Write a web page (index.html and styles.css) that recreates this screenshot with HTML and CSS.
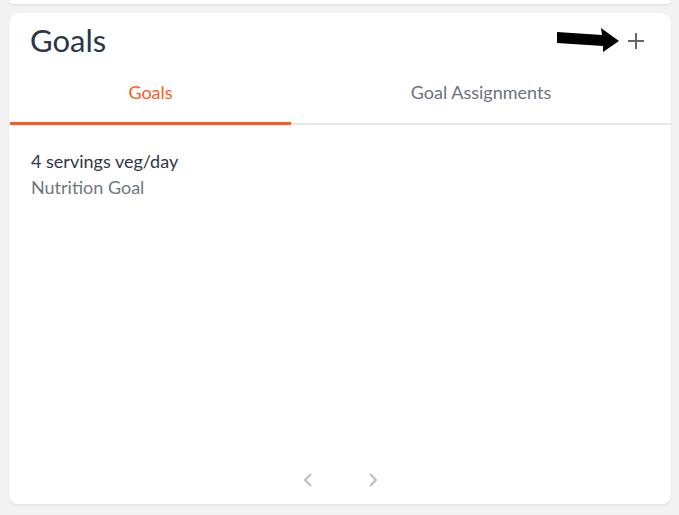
FILE: index.html
```html
<!DOCTYPE html>
<html>
<head>
<meta charset="utf-8">
<link rel="stylesheet" href="styles.css">
</head>
<body>
<div class="page">
  <div class="card card-prev"></div>
  <div class="card goals">
    <div class="header">
      <h1 class="title">Goals</h1>
      <div class="actions">
        <svg class="arrow" width="64" height="26" viewBox="0 0 64 26">
          <path d="M1 5 L46 8 L45 1 L63 14 L47 25 L47 19 L1 16 Z" fill="#000"/>
        </svg>
        <svg class="plus" width="20" height="20" viewBox="0 0 20 20">
          <path d="M10 2 V18 M2 10 H18" stroke="#666" stroke-width="2" fill="none"/>
        </svg>
      </div>
    </div>
    <div class="tabs">
      <div class="tab active">Goals</div>
      <div class="tab">Goal Assignments</div>
    </div>
    <div class="list">
      <div class="item">
        <div class="item-title">4 servings veg/day</div>
        <div class="item-sub">Nutrition Goal</div>
      </div>
    </div>
    <div class="pager">
      <svg width="12" height="16" viewBox="0 0 12 16"><path d="M9 2 L3 8 L9 14" stroke="#bdbdbd" stroke-width="2" fill="none"/></svg>
      <svg width="12" height="16" viewBox="0 0 12 16"><path d="M3 2 L9 8 L3 14" stroke="#bdbdbd" stroke-width="2" fill="none"/></svg>
    </div>
  </div>
</div>
</body>
</html>
```
FILE: styles.css
```css
html, body {
  margin: 0;
  padding: 0;
  background: #f2f2f2;
  font-family: Lato, "Open Sans", sans-serif;
}
.page {
  width: 679px;
  height: 515px;
  overflow: hidden;
  display: flex;
  flex-direction: column;
  gap: 9px;
}
.card {
  background: #fff;
  border-radius: 9px;
  margin: 0 8px 0 9px;
  box-shadow: 0 1px 3px rgba(0,0,0,0.08);
}
.card-prev {
  height: 4px;
  border-radius: 0 0 9px 9px;
}
.goals {
  height: 491px;
  display: flex;
  flex-direction: column;
}
.header {
  display: flex;
  justify-content: space-between;
  align-items: center;
  height: 56px;
  box-sizing: border-box;
  padding: 0 25px 3px 21px;
}
.title {
  margin: 0;
  font-weight: 400;
  font-size: 31px;
  color: #2e3648;
}
.actions {
  display: flex;
  align-items: center;
  gap: 6px;
  margin-top: 3px;
}
.arrow { display: block; margin-top: -3px; }
.plus { display: block; }
.tabs {
  display: flex;
  border-bottom: 2px solid #e6e6e6;
  margin-left: 1px;
}
.tab {
  flex: 1;
  text-align: center;
  height: 56px;
  line-height: 47px;
  font-size: 18px;
  color: #6b7280;
  box-sizing: border-box;
  margin-bottom: -2px;
}
.tab.active {
  color: #ff5a24;
  border-bottom: 3px solid #ff5a24;
  flex: 0 0 281px;
}
.list {
  flex: 1;
  padding: 23px 22px 0;
}
.item-title {
  font-size: 18px;
  color: #2e3648;
  line-height: 26px;
}
.item-sub {
  font-size: 18px;
  color: #70777f;
  line-height: 26px;
}
.pager {
  display: flex;
  justify-content: center;
  gap: 53px;
  padding-bottom: 16px;
}
.pager svg { display: block; }
```
